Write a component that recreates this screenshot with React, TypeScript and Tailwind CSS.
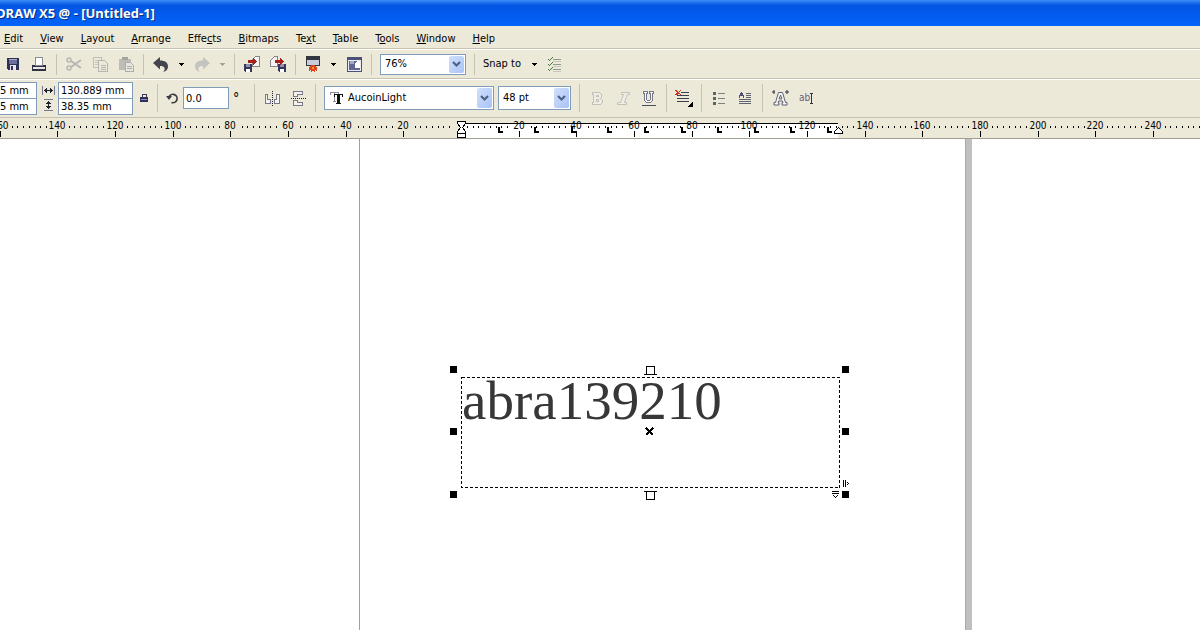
import React, { useState } from "react";

const menus = [
  ["", "E", "dit"],
  ["", "V", "iew"],
  ["", "L", "ayout"],
  ["", "A", "rrange"],
  ["Effe", "c", "ts"],
  ["", "B", "itmaps"],
  ["Te", "x", "t"],
  ["", "T", "able"],
  ["T", "o", "ols"],
  ["", "W", "indow"],
  ["", "H", "elp"],
];

const fontNames = ["AucoinLight", "Arial", "Tahoma", "Times New Roman"];
const fontSizes = ["24 pt", "36 pt", "48 pt", "72 pt"];
const zoomLevels = ["50%", "76%", "100%", "200%"];

type IconProps = { w?: number; h?: number; children: React.ReactNode };

const Icon = ({ w = 16, h = 16, children }: IconProps) => (
  <svg width={w} height={h} viewBox={`0 0 ${w} ${h}`} fill="none" shapeRendering="crispEdges" aria-hidden="true">
    {children}
  </svg>
);

const Tool = ({ label, children }: { label: string; children: React.ReactNode }) => (
  <button type="button" aria-label={label} className="flex h-6 w-[26px] shrink-0 items-center justify-center">
    {children}
  </button>
);

const Separator = ({ tall = false }: { tall?: boolean }) => (
  <div className="flex w-[9px] shrink-0 justify-center">
    <div className={tall ? "h-7 w-px bg-[#c5c2b2]" : "h-[21px] w-px bg-[#c5c2b2]"} />
  </div>
);

const Arrow = ({ color = "#000" }: { color?: string }) => (
  <Icon w={5} h={3}>
    <path d="M0 0h5v1H0zM1 1h3v1H1zM2 2h1v1H2z" fill={color} />
  </Icon>
);

const ArrowButton = ({ label, color }: { label: string; color?: string }) => (
  <button type="button" aria-label={label} className="flex h-6 w-[15px] shrink-0 items-center justify-center">
    <Arrow color={color} />
  </button>
);

const Chevron = () => (
  <span className="pointer-events-none absolute inset-y-0.5 right-0.5 flex w-[15px] items-center justify-center rounded-xs bg-linear-to-br from-[#d0dffd] to-[#a9c3f5]">
    <svg width="9" height="7" viewBox="0 0 9 7" fill="none" aria-hidden="true">
      <path d="M1 1l3.500 3.500L8 1" stroke="#4d6185" strokeWidth="2.200" />
    </svg>
  </span>
);

const Floppy = () => (
  <>
    <path d="M0 0h8v8H1L0 7z" fill="#34365c" />
    <path d="M2 0h4v3H2z" fill="#8d90b4" />
    <path d="M2 5h4v3H2z" fill="#fff" />
  </>
);

const StandardBar = () => {
  const [zoom, setZoom] = useState("76%");
  return (
    <div className="flex h-[29px] items-center border-t border-white">
      <Tool label="Save">
        <Icon w={12} h={12}>
          <path d="M0 0h12v12H1L0 11z" fill="#2e3057" />
          <path d="M2 1h8v5H2z" fill="#6b6f9c" />
          <path d="M2 1h8v1H2z" fill="#a9abc8" />
          <path d="M3 7h6v5H3z" fill="#ece9f4" />
          <path d="M4 8h2v4H4z" fill="#2e3057" />
        </Icon>
      </Tool>
      <Tool label="Print">
        <Icon w={14} h={14}>
          <path d="M3.500 .5h7v8h-7z" fill="#fff" stroke="#8a8c96" />
          <path d="M0 8h3v1h8V8h3v6H0z" fill="#30323f" />
          <path d="M1 10h12v2H1z" fill="#e6e6ea" />
        </Icon>
      </Tool>
      <Separator />
      <Tool label="Cut">
        <svg width="16" height="14" viewBox="0 0 16 14" fill="none" stroke="#b7b6b2" aria-hidden="true">
          <circle cx="3" cy="3" r="2" strokeWidth="1.500" />
          <circle cx="3" cy="11" r="2" strokeWidth="1.500" />
          <path d="M5 4l10 7M5 10l10-7" strokeWidth="2" />
        </svg>
      </Tool>
      <Tool label="Copy">
        <Icon w={15} h={15}>
          <path d="M.5 .5h8v10h-8z" stroke="#bfbeb9" />
          <path d="M2 3h5M2 5h5M2 7h3" stroke="#c6c5c0" />
          <path d="M5.500 3.500h6l3 3v8h-9z" fill="#ece9d8" stroke="#b5b4b0" />
          <path d="M8 8.500h5M8 10.500h5M8 12.500h5" stroke="#b5b4b0" />
        </Icon>
      </Tool>
      <Tool label="Paste">
        <Icon w={15} h={15}>
          <path d="M0 2h12v11H0z" fill="#bdbcb8" />
          <path d="M3 0h6v3H3z" fill="#a5a4a1" />
          <path d="M6.500 5.500h5l3 3v6h-8z" fill="#e9e7dc" stroke="#aeada9" />
          <path d="M8 9.500h5M8 11.500h5" stroke="#aeada9" />
        </Icon>
      </Tool>
      <Separator />
      <Tool label="Undo">
        <svg width="16" height="15" viewBox="0 0 16 15" aria-hidden="true">
          <path d="M0 6L7 0v3.500c5 0 8 2 8 6 0 3-2 5-5 5.500 1.500-1.500 2-2.500 1.500-4C11 9.500 9.500 9 7 9v3.500z" fill="#45454f" />
        </svg>
      </Tool>
      <ArrowButton label="Undo list" />
      <Tool label="Redo">
        <svg width="16" height="15" viewBox="0 0 16 15" aria-hidden="true">
          <path d="M16 6L9 0v3.500c-5 0-8 2-8 6 0 3 2 5 5 5.500-1.500-1.500-2-2.500-1.500-4C5 9.500 6.500 9 9 9v3.500z" fill="#c3c3bf" />
        </svg>
      </Tool>
      <ArrowButton label="Redo list" color="#a5a398" />
      <Separator />
      <Tool label="Import">
        <Icon w={16} h={16}>
          <path d="M8.500 3.500l3-3h4v10h-7z" fill="#f6f5f2" stroke="#85858d" />
          <g transform="translate(0 8)">
            <Floppy />
          </g>
          <path d="M4 4h5V2h1v1h1v1h1v1h1v1h-1v1h-1v1h-1v1H9V7H4z" fill="#a8201a" />
        </Icon>
      </Tool>
      <Tool label="Export">
        <Icon w={16} h={16}>
          <path d="M.5 4.500l4-4h3v10h-7z" fill="#f6f5f2" stroke="#85858d" />
          <g transform="translate(8 8)">
            <Floppy />
          </g>
          <path d="M5 4h5V2h1v1h1v1h1v1h1v1h-1v1h-1v1h-1v1h-1V7H5z" fill="#a8201a" />
        </Icon>
      </Tool>
      <Separator />
      <Tool label="Application launcher">
        <Icon w={14} h={16}>
          <path d="M0 0h14v10H0z" fill="#33353f" />
          <path d="M1 4h12v5H1z" fill="#c9cddb" />
          <path d="M5 9h4v1h1v1h1v4h-1v-1H9v2H8v-1H6v1H5v-2H4v1H3v-4h1v-1h1z" fill="#d8451c" />
          <path d="M6 11h2v2H6z" fill="#f19a2e" />
        </Icon>
      </Tool>
      <ArrowButton label="Launcher list" />
      <Tool label="Welcome screen">
        <Icon w={15} h={15}>
          <path d="M.5 .5h14v14H.5z" fill="#eceef4" stroke="#4a5078" />
          <path d="M1 1h13v2H1z" fill="#4b5076" />
          <path d="M2 4h11v9H2z" fill="#5f6794" />
          <path d="M8 6h1V5h1V4h3v7H8z" fill="#fff" />
          <path d="M3 4h4v3H3z" fill="#a2a9c9" />
        </Icon>
      </Tool>
      <Separator />
      <div className="relative mx-1 h-[21px] w-[86px] shrink-0">
        <select
          aria-label="Zoom level"
          value={zoom}
          onChange={(e) => setZoom(e.target.value)}
          className="size-full appearance-none border border-[#7f9db9] bg-white pl-1 text-[11px]"
        >
          {zoomLevels.map((z) => (
            <option key={z}>{z}</option>
          ))}
        </select>
        <Chevron />
      </div>
      <Separator />
      <button type="button" className="flex h-6 w-[62px] shrink-0 items-center justify-between px-1">
        <span>Snap to</span>
        <Arrow />
      </button>
      <Tool label="Options">
        <Icon w={13} h={15}>
          <path d="M5 2.500h8M5 7.500h8M5 12.500h8" stroke="#8e9a8c" />
          <path d="M5 4.500h8M5 9.500h8M5 14.500h8" stroke="#c3c9bd" />
          <path d="M0 2h1v1H0zM1 3h1v1H1zM2 2h1v1H2zM3 1h1v1H3zM4 0h1v1H4zM0 7h1v1H0zM1 8h1v1H1zM2 7h1v1H2zM3 6h1v1H3zM4 5h1v1H4zM0 12h1v1H0zM1 13h1v1H1zM2 12h1v1H2zM3 11h1v1H3zM4 10h1v1H4z" fill="#3f7a42" />
        </Icon>
      </Tool>
    </div>
  );
};

const PropertyBar = () => {
  const [width, setWidth] = useState("130.889 mm");
  const [height, setHeight] = useState("38.35 mm");
  const [angle, setAngle] = useState("0.0");
  const [font, setFont] = useState("AucoinLight");
  const [size, setSize] = useState("48 pt");

  return (
    <div className="flex h-[39px] items-center border-t border-[#c5c2b2] shadow-[inset_0_1px_0_#fff]">
      <div className="flex w-[37px] shrink-0 flex-col border border-l-0 border-[#7f9db9] bg-white">
        <input aria-label="X position" defaultValue="5 mm" className="h-4 w-full border-b border-[#7f9db9]" />
        <input aria-label="Y position" defaultValue="5 mm" className="h-[15px] w-full" />
      </div>
      <div className="flex w-[21px] shrink-0 flex-col items-end gap-1 pr-[3px]">
        <Icon w={13} h={9}>
          <path d="M.5 0v9M12.500 0v9" stroke="#77798f" />
          <path d="M2 4h9v1H2zM3 3h1v3H3zM4 2h1v5H4zM8 2h1v5H8zM9 3h1v3H9z" fill="#20222e" />
        </Icon>
        <Icon w={11} h={12}>
          <path d="M0 .5h9M0 11.500h9" stroke="#77798f" />
          <path d="M4 2h1v8H4zM3 3h3v1H3zM2 4h5v1H2zM2 7h5v1H2zM3 8h3v1H3z" fill="#20222e" />
        </Icon>
      </div>
      <div className="flex w-[75px] shrink-0 flex-col border border-[#7f9db9] bg-white">
        <input
          aria-label="Object width"
          value={width}
          onChange={(e) => setWidth(e.target.value)}
          className="h-4 w-full border-b border-[#7f9db9] pl-0.5"
        />
        <input
          aria-label="Object height"
          value={height}
          onChange={(e) => setHeight(e.target.value)}
          className="h-[15px] w-full pl-0.5"
        />
      </div>
      <button type="button" aria-label="Lock ratio" className="flex h-6 w-5 shrink-0 items-center justify-end pr-1">
        <Icon w={9} h={10}>
          <path d="M2.500 4V1.500h4V4" stroke="#3a3c52" />
          <path d="M0 4h8v5H0z" fill="#2e3057" />
          <path d="M1 6h6v1H1z" fill="#8a8fc0" />
        </Icon>
      </button>
      <Separator tall />
      <label htmlFor="angle" className="flex w-[21px] shrink-0 justify-center">
        <svg width="13" height="12" viewBox="0 0 13 12" fill="none" aria-label="Angle of rotation">
          <path d="M3 5a4.200 4.200 0 1 1 2.500 5.500" stroke="#3a3a44" strokeWidth="1.700" />
          <path d="M0 4h6L3 8z" fill="#3a3a44" />
        </svg>
      </label>
      <input
        id="angle"
        value={angle}
        onChange={(e) => setAngle(e.target.value)}
        className="h-[22px] w-[46px] shrink-0 border border-[#7f9db9] bg-white pl-0.5"
      />
      <span className="w-[21px] shrink-0 pl-1 text-sm">°</span>
      <Separator tall />
      <Tool label="Mirror horizontally">
        <Icon w={15} h={15}>
          <path d="M7.500 0v15" stroke="#222" strokeDasharray="1 1" />
          <path d="M.5 3.500h2v5h3v4h-5zM14.500 3.500h-3v5h-2v4h5z" fill="#f4f3ee" stroke="#787a8c" />
        </Icon>
      </Tool>
      <Tool label="Mirror vertically">
        <Icon w={15} h={15}>
          <path d="M0 7.500h15" stroke="#222" strokeDasharray="1 1" />
          <path d="M2.500 .5h9v3h-5v2h-4zM2.500 9.500h4v2h5v3h-9z" fill="#f4f3ee" stroke="#787a8c" />
        </Icon>
      </Tool>
      <Separator tall />
      <div className="relative ml-1 h-6 w-[170px] shrink-0">
        <select
          aria-label="Font"
          value={font}
          onChange={(e) => setFont(e.target.value)}
          className="size-full appearance-none border border-[#7f9db9] bg-white pl-[23px] text-[11px]"
        >
          {fontNames.map((f) => (
            <option key={f}>{f}</option>
          ))}
        </select>
        <span className="pointer-events-none absolute top-1.5 left-1.5">
          <Icon w={13} h={13}>
            <path d="M0 0h9v3H8V1H5v8h1v1H3V9h1V1H1v2H0z" fill="#8c8d99" />
            <path d="M4 2h9v3h-1V3h-2v8h1v1H6v-1h1V3H5v2H4z" fill="#111" />
          </Icon>
        </span>
        <Chevron />
      </div>
      <div className="relative mx-1 h-6 w-[73px] shrink-0">
        <select
          aria-label="Font size"
          value={size}
          onChange={(e) => setSize(e.target.value)}
          className="size-full appearance-none border border-[#7f9db9] bg-white pl-1 text-[11px]"
        >
          {fontSizes.map((s) => (
            <option key={s}>{s}</option>
          ))}
        </select>
        <Chevron />
      </div>
      <Separator tall />
      <Tool label="Bold">
        <Icon w={11} h={13}>
          <path d="M.5 .5h7l2 2v3l-1 1 2 2v2l-2 2h-8v-2h1v-8h-1zM4.500 3.500h2v1h-2zM4.500 7.500h2v2h-2z" fill="#efede2" stroke="#c2c1bb" />
        </Icon>
      </Tool>
      <Tool label="Italic">
        <svg width="13" height="13" viewBox="0 0 13 13" aria-hidden="true">
          <path d="M4.500 .5h8v2h-2l-3 8h2v2h-9v-2h3l3-8h-2z" fill="#efede2" stroke="#c2c1bb" />
        </svg>
      </Tool>
      <Tool label="Underline">
        <Icon w={14} h={15}>
          <path d="M1.500 .5h4v2h-1v6l1 1h2l1-1v-6h-1v-2h4v2h-1v7l-2 2h-4l-2-2v-7h-1z" fill="#fafafa" stroke="#74768a" />
          <path d="M0 14.500h14" stroke="#4b4d5c" />
        </Icon>
      </Tool>
      <Separator tall />
      <Tool label="Horizontal alignment">
        <Icon w={18} h={18}>
          <path d="M6 3.500h8M2 6.500h12M2 9.500h12M2 12.500h12" stroke="#3d3f50" />
          <path d="M0 1h2v1h1v1h1V2h1V1h1v1H5v1H4v1h1v1h1v1H5V5H3v1H0V5h1V4h1V3H1V2H0z" fill="#d8301c" />
          <path d="M17 13h1v5h-5v-1h1v-1h1v-1h1v-1h1z" fill="#000" />
        </Icon>
      </Tool>
      <Separator tall />
      <Tool label="Bullet list">
        <Icon w={12} h={13}>
          <path d="M0 0h3v3H0zM0 5h3v3H0zM0 10h3v3H0z" fill="#5c6468" />
          <path d="M5 1.500h7M5 6.500h7M5 11.500h7" stroke="#7d8085" />
        </Icon>
      </Tool>
      <Tool label="Drop cap">
        <Icon w={13} h={12}>
          <path d="M0 6V3h1V1h1V0h1v1h1v2h1v3H4V4H1v2z" fill="#4c5178" />
          <path d="M7 1.500h5M7 3.500h5M7 5.500h5M0 7.500h12M0 9.500h12M0 11.500h12" stroke="#60626f" />
        </Icon>
      </Tool>
      <Separator tall />
      <Tool label="Character formatting">
        <svg width="17" height="16" viewBox="0 0 17 16" fill="none" aria-hidden="true">
          <path d="M6.500 2.500h4l3 10h1.500v2.500h-5V13h1l-.5-2h-4l-.5 2h1v2H2v-2.500h1.500zM8.500 5L7 9h3z" fill="#fafafa" stroke="#5d5f72" />
          <path d="M0 2h3M2 0v4M13 2h4M15 0v4" stroke="#333541" />
        </svg>
      </Tool>
      <button type="button" aria-label="Edit text" className="flex h-6 w-[26px] shrink-0 items-center justify-center text-[10px] text-[#63657a]">
        ab
        <Icon w={3} h={11}>
          <path d="M0 .5h3M0 10.500h3M1.500 0v11" stroke="#333" />
        </Icon>
      </button>
    </div>
  );
};

// horizontal ruler: 20 mm takes 57.65 px, zero sits at x = 461
const ORIGIN = 461;
const STEP = 57.65;

const Ruler = () => {
  const majors = Array.from({ length: 21 }, (_, i) => i - 8);
  const tabs = Array.from({ length: 10 }, (_, i) => Math.round(ORIGIN + 36.6 * (i + 1)));

  return (
    <div className="h-[22px] overflow-hidden border-t border-b border-t-[#c5c2b2] border-b-[#a19e90]">
      <svg width="100%" height="20" shapeRendering="crispEdges" role="img" aria-label="Horizontal ruler">
        <rect x={ORIGIN} y="5" width="377" height="15" fill="#fff" />
        <rect x={ORIGIN} y="5" width="377" height="1" fill="#000" />
        {majors.map((i) => {
          const x = Math.round(ORIGIN + i * STEP);
          const dots = i === 0 ? [1, 2, 3, 4, 5, 6, 7, 8] : [2, 3, 4, 5, 6, 7, 8];
          return (
            <g key={i}>
              {dots.map((n) => (
                <rect key={n} x={Math.round(x + (n * STEP) / 10)} y="8" width="1" height="2" fill="#000" />
              ))}
              {i !== 0 && (
                <>
                  <rect x={x} y="13" width="1" height="6" fill="#000" />
                  <text
                    x={x}
                    y="11"
                    textAnchor="middle"
                    className="font-['Liberation_Sans_Narrow','DejaVu_Sans_Condensed',sans-serif] text-[10px]"
                  >
                    {Math.abs(i) * 20}
                  </text>
                </>
              )}
            </g>
          );
        })}
        {tabs.map((x) => (
          <path key={x} d={`M${x} 9h2v4h3v2h-5z`} fill="#000" />
        ))}
        <path d="M457.500 3.500h8v2l-3 4 3 4v6h-8v-6l3-4-3-4zM457 15.500h9" fill="#fff" stroke="#000" />
        <path d="M838.500 9.500l4 4v2h-8v-2z" fill="#fff" stroke="#000" />
      </svg>
    </div>
  );
};

// dashed text frame with its sizing handles
const Selection = () => (
  <svg
    width="400"
    height="134"
    viewBox="0 0 400 134"
    fill="none"
    shapeRendering="crispEdges"
    aria-hidden="true"
    className="absolute top-[227px] left-[90px]"
  >
    <rect x="11.500" y="11.500" width="378" height="110" stroke="#000" strokeDasharray="3 2" />
    <path d="M0 0h7v7H0zM392 0h7v7h-7zM0 62h7v7H0zM392 62h7v7h-7zM0 125h7v7H0zM392 125h7v7h-7z" fill="#000" />
    <path d="M196.500 .5h8v8h-8zM194 8.500h13M196.500 125.500h8v8h-8zM194 125.500h13" fill="#fff" stroke="#000" />
    <path d="M196 62l7 7M203 62l-7 7" stroke="#000" strokeWidth="2" />
    <path d="M393.500 114v7M395.500 114v7M397 116.500h1M398 117.500h1M397 118.500h1" stroke="#000" />
    <path d="M382 125.500h7M382 127.500h7M383 129.500h1M387 129.500h1M384 130.500h1M386 130.500h1M385 131.500h1" stroke="#000" />
  </svg>
);

const Canvas = () => (
  <main className="flex min-h-[491px] flex-1 bg-white pl-[359px]">
    <div className="relative w-[606px] shrink-0 border-l border-[#a0a0a0]">
      <p className="absolute top-[232px] left-[102px] font-['Liberation_Serif',serif] text-[55px] leading-[60px] text-[#373737]">
        abra139210
      </p>
      <Selection />
    </div>
    <div className="w-[7px] shrink-0 border-l border-[#a9a9a9] bg-[#c0c0c0]" />
  </main>
);

const App = () => {
  return (
    <div className="flex min-h-screen flex-col overflow-hidden bg-[#ece9d8] font-['DejaVu_Sans_Condensed','DejaVu_Sans',sans-serif] text-[11px] leading-[14px] text-black">
      <header className="flex h-[26px] items-center overflow-hidden bg-linear-to-b from-[#3c8cf8] via-[#0355e4] via-20% to-[#0264fa]">
        <h1 className="-ml-1 font-['Open_Sans',sans-serif] text-[13px] leading-5 font-bold whitespace-nowrap text-white [text-shadow:1px_1px_0_#0a2a80]">
          DRAW X5 @ - [Untitled-1]
        </h1>
      </header>
      <nav className="flex h-[23px] items-center gap-[17px] border-b border-[#c5c2b2] pt-1 pl-1">
        {menus.map(([before, key, after]) => (
          <button key={before + key + after} type="button" className="shrink-0">
            {before}
            <u className="underline-offset-1">{key}</u>
            {after}
          </button>
        ))}
      </nav>
      <StandardBar />
      <PropertyBar />
      <Ruler />
      <Canvas />
    </div>
  );
};

export default App;
